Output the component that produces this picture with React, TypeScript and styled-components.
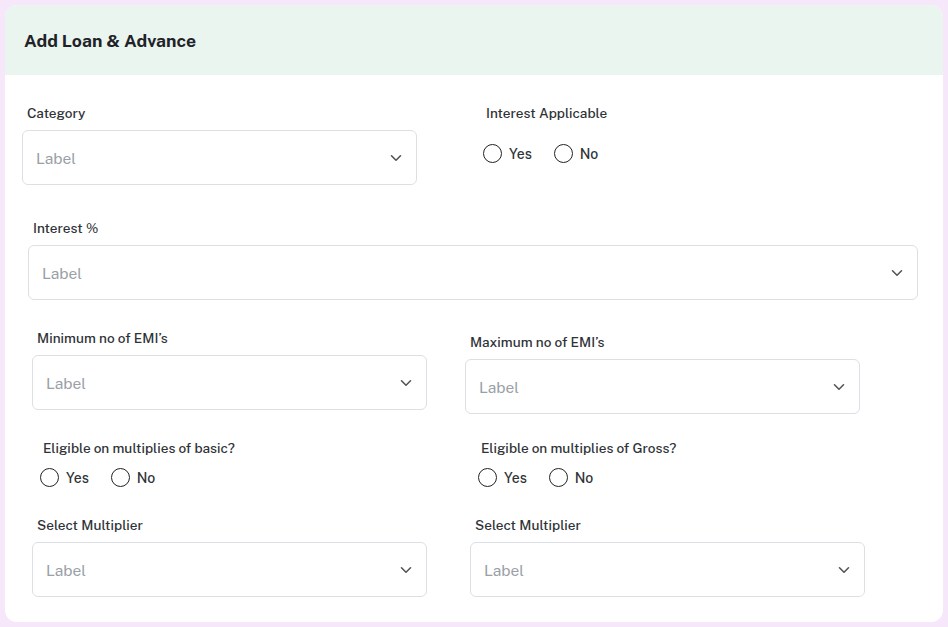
import React from 'react';
import styled, { createGlobalStyle } from 'styled-components';

const Global = createGlobalStyle`
  html, body { margin: 0; background: #f6e8fa; }
  body { font-family: 'Public Sans', Inter, 'Noto Sans', sans-serif; }
`;

const Frame = styled.div`
  width: 948px; height: 627px; box-sizing: border-box;
  padding: 5px 5px 5px 5px; background: #f6e8fa;
`;

const Card = styled.div`
  height: 100%; background: #fff; border-radius: 12px; overflow: hidden;
  display: flex; flex-direction: column;
`;

const Header = styled.div`
  height: 70px; background: #eaf5ef; display: flex; align-items: center;
  padding-left: 19px; box-sizing: border-box;
  font-size: 17.6px; font-weight: 700; color: #1f2328;
`;

const Row = styled.div<{ $top: number }>`
  display: flex; align-items: flex-start; margin-top: ${p => p.$top}px;
`;

const Field = styled.div<{ $left: number; $w?: number; $top?: number }>`
  display: flex; flex-direction: column;
  margin-left: ${p => p.$left}px;
  margin-top: ${p => p.$top ?? 0}px;
  width: ${p => (p.$w ? `${p.$w}px` : 'auto')};
`;

const Label = styled.div<{ $indent?: number }>`
  font-size: 13.6px; font-weight: 500; color: #2f3337; line-height: 16px;
  padding-left: ${p => p.$indent ?? 5}px;
`;

const Select = styled.div`
  margin-top: 9px; height: 55px; box-sizing: border-box;
  border: 1px solid #dcdfe3; border-radius: 6px;
  display: flex; align-items: center; justify-content: space-between;
  padding: 0 14px 0 13px; font-size: 15.5px; color: #9aa0a6;
`;

const Radios = styled.div<{ $gap: number }>`
  display: flex; gap: 22px; margin-top: ${p => p.$gap}px; padding-left: 2px;
`;

const Radio = styled.label`
  display: flex; align-items: center; gap: 7px;
  font-size: 14px; font-weight: 500; color: #2f3337;
`;

const Circle = styled.span`
  width: 19px; height: 19px; box-sizing: border-box;
  border: 1.5px solid #222; border-radius: 50%;
`;

const Chevron = () => (
  <svg width="12" height="8" viewBox="0 0 12 8" fill="none">
    <path d="M1.5 1.8 6 6.2l4.5-4.4" stroke="#555" strokeWidth="1.6" strokeLinecap="round" strokeLinejoin="round" />
  </svg>
);

const Dropdown = () => (
  <Select>
    <span>Label</span>
    <Chevron />
  </Select>
);

const YesNo = ({ gap }: { gap: number }) => (
  <Radios $gap={gap}>
    <Radio><Circle />Yes</Radio>
    <Radio><Circle />No</Radio>
  </Radios>
);

export default function App() {
  return (
    <Frame>
      <Global />
      <Card>
        <Header>Add Loan &amp; Advance</Header>

        <Row $top={30}>
          <Field $left={17} $w={395}>
            <Label>Category</Label>
            <Dropdown />
          </Field>
          <Field $left={64}>
            <Label>Interest Applicable</Label>
            <YesNo gap={23} />
          </Field>
        </Row>

        <Row $top={35}>
          <Field $left={23} $w={890}>
            <Label>Interest %</Label>
            <Dropdown />
          </Field>
        </Row>

        <Row $top={30}>
          <Field $left={27} $w={395}>
            <Label>Minimum no of EMI’s</Label>
            <Dropdown />
          </Field>
          <Field $left={38} $w={395} $top={4}>
            <Label>Maximum no of EMI’s</Label>
            <Dropdown />
          </Field>
        </Row>

        <Row $top={26}>
          <Field $left={33} $w={400}>
            <Label>Eligible on multiplies of basic?</Label>
            <YesNo gap={12} />
          </Field>
          <Field $left={38}>
            <Label>Eligible on multiplies of Gross?</Label>
            <YesNo gap={12} />
          </Field>
        </Row>

        <Row $top={30}>
          <Field $left={27} $w={395}>
            <Label>Select Multiplier</Label>
            <Dropdown />
          </Field>
          <Field $left={43} $w={395}>
            <Label>Select Multiplier</Label>
            <Dropdown />
          </Field>
        </Row>
      </Card>
    </Frame>
  );
}
